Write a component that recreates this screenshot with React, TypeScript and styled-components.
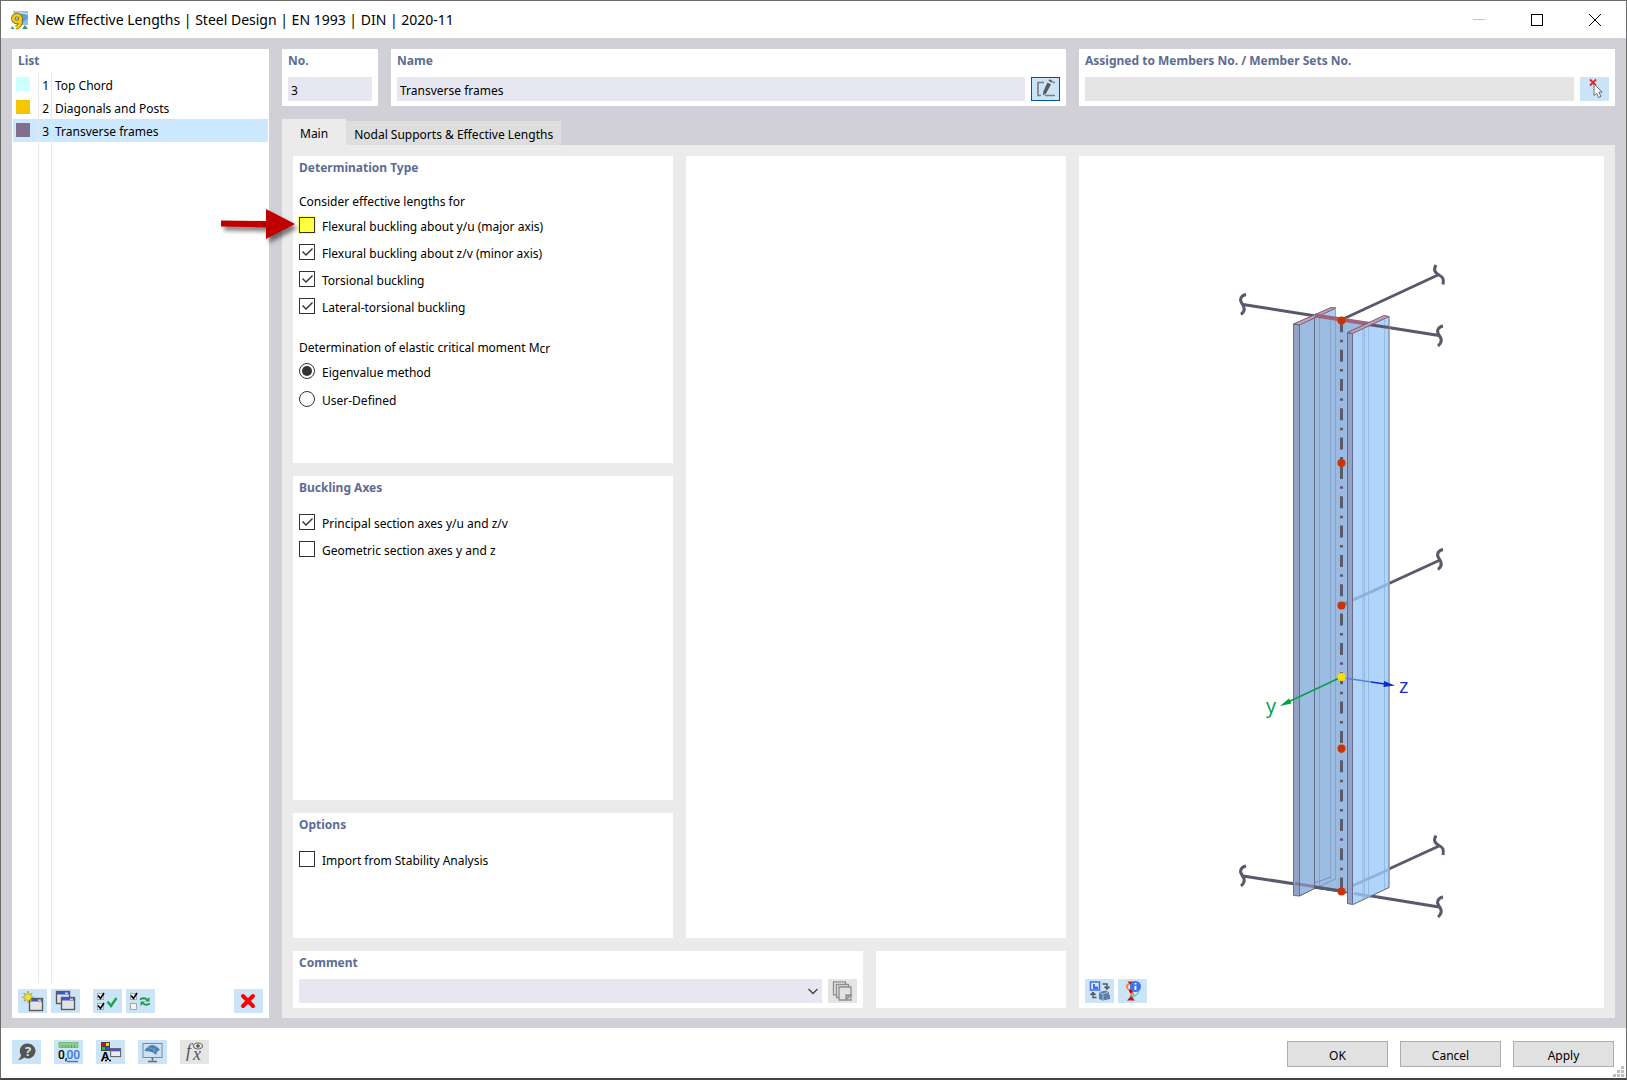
import React, { useState } from "react";
import styled, { createGlobalStyle } from "styled-components";

const color = {
  frame: "#6b6b6b",
  backdrop: "#d1d0d6",
  sheet: "#ebebeb",
  panel: "#ffffff",
  field: "#e7e7f1",
  disabled: "#e5e5e5",
  tool: "#cce4f7",
  selected: "#cce8ff",
  heading: "#5d6c94",
  rule: "#e8e8ec",
  ink: "#000000",
};

const GlobalStyle = createGlobalStyle`
  *, *::before, *::after { box-sizing: border-box; }
  body { margin: 0; }
  body, button, input, select {
    font-family: "Noto Sans", "Open Sans", sans-serif;
    font-size: 12px;
    color: ${color.ink};
  }
  button { padding: 0; border: 0; background: none; }
`;

const Window = styled.div`
  display: flex;
  flex-direction: column;
  min-height: 100vh;
  border: 1px solid ${color.frame};
  border-bottom: 2px solid #444444;
  background: ${color.panel};
`;

const TitleBar = styled.header`
  display: flex;
  align-items: center;
  height: 37px;
  padding: 0 2px 0 9px;
`;

const Title = styled.h1`
  flex: 1;
  margin: 0 0 0 5px;
  font-size: 14px;
  line-height: 20px;
  font-weight: 400;
`;

const CaptionButton = styled.button`
  display: grid;
  place-items: center;
  width: 58px;
  height: 37px;
`;

const Body = styled.main`
  flex: 1;
  display: grid;
  grid-template-columns: 257px minmax(0, 1fr);
  gap: 13px;
  padding: 11px 11px 10px;
  background: ${color.backdrop};
`;

const Panel = styled.section`
  display: flex;
  flex-direction: column;
  min-width: 0;
  background: ${color.panel};
`;

const Heading = styled.h2`
  height: 28px;
  margin: 0;
  padding: 2px 6px 0;
  font-size: 12px;
  line-height: 20px;
  font-weight: 700;
  color: ${color.heading};
  white-space: nowrap;
`;

const ListPanel = styled(Panel)`
  padding: 0 1px;
`;

const ListHeading = styled(Heading)`
  height: 24px;
  padding: 2px 5px 0;
`;

const Rows = styled.div`
  flex: 1;
  display: flex;
  flex-direction: column;
`;

const Row = styled.button<{ $selected?: boolean }>`
  display: grid;
  grid-template-columns: 26px 13px minmax(0, 1fr);
  height: 23px;
  line-height: 25px;
  text-align: left;
  background: ${(p) => (p.$selected ? color.selected : "transparent")};
`;

const RowSpace = styled.div`
  flex: 1;
  display: grid;
  grid-template-columns: 26px 13px minmax(0, 1fr);
`;

const SwatchCell = styled.span`
  border-right: 1px solid ${color.rule};
  padding: 4px 3px;
`;

const Swatch = styled.span<{ $fill: string }>`
  display: block;
  width: 14px;
  height: 14px;
  background: ${(p) => p.$fill};
`;

const NumberCell = styled.span`
  border-right: 1px solid ${color.rule};
  padding-right: 2px;
  text-align: right;
`;

const NameCell = styled.span`
  padding-left: 3px;
`;

const ListTools = styled.div`
  display: flex;
  gap: 4px;
  padding: 6px 5px 5px;
`;

const ToolButton = styled.button<{ $off?: boolean; $active?: boolean; $before?: string }>`
  display: grid;
  place-items: center;
  flex: none;
  width: 29px;
  height: 24px;
  margin-left: ${(p) => p.$before || "0"};
  background: ${(p) => (p.$off ? color.disabled : color.tool)};
  border: ${(p) => (p.$active ? "1px solid #00549f" : "0")};
`;

const Editor = styled.div`
  display: flex;
  flex-direction: column;
  min-width: 0;
`;

const TopRow = styled.div`
  display: grid;
  grid-template-columns: 96px minmax(0, 1fr) 536px;
  gap: 13px;
  margin-bottom: 13px;
`;

const FieldRow = styled.div`
  display: flex;
  gap: 6px;
  padding: 0 6px 5px;
`;

const TextField = styled.input`
  flex: 1;
  min-width: 0;
  height: 24px;
  padding: 3px 3px 0;
  border: 0;
  border-radius: 0;
  background: ${(p) => (p.disabled ? color.disabled : color.field)};
`;

const Tabs = styled.div`
  display: flex;
  align-items: flex-end;
`;

const Tab = styled.button<{ $active?: boolean }>`
  height: ${(p) => (p.$active ? "26px" : "24px")};
  padding: ${(p) => (p.$active ? "3px 18px 0" : "3px 8px 0")};
  background: ${(p) => (p.$active ? color.sheet : "#dedede")};
`;

const Sheet = styled.div`
  flex: 1;
  display: grid;
  grid-template-columns: minmax(0, 1fr) 525px;
  gap: 13px;
  padding: 11px 11px 10px;
  background: ${color.sheet};
`;

const Settings = styled.div`
  display: flex;
  flex-direction: column;
  gap: 13px;
`;

const Columns = styled.div`
  flex: 1;
  display: grid;
  grid-template-columns: repeat(2, minmax(0, 1fr));
  gap: 13px;
`;

const Groups = styled.div`
  display: grid;
  grid-template-rows: 307fr 324fr 125fr;
  gap: 13px;
`;

const CommentRow = styled.div`
  display: grid;
  grid-template-columns: 3fr 1fr;
  gap: 13px;
`;

const Options = styled.div<{ $gap?: number }>`
  display: flex;
  flex-direction: column;
  align-items: flex-start;
  gap: ${(p) => p.$gap ?? 5}px;
  padding: 0 6px;
`;

const Caption = styled.p<{ $above: number }>`
  margin: ${(p) => p.$above}px 6px 1px;
  line-height: 22px;
`;

const Subscript = styled.sub`
  font-size: 12px;
  line-height: 1;
  vertical-align: -1px;
`;

const Space = styled.div`
  height: 7px;
`;

const OptionLabel = styled.label`
  display: flex;
  align-items: center;
  gap: 7px;
`;

const OptionText = styled.span`
  padding-top: 4px;
  line-height: 18px;
`;

const CheckBox = styled.input<{ $marked?: boolean }>`
  appearance: none;
  width: 16px;
  height: 16px;
  margin: 0;
  border: 1px solid #333333;
  background: ${(p) => (p.$marked ? "#ffff3f" : "#ffffff")};
  box-shadow: ${(p) => (p.$marked ? "0 0 1px 1px #ffff66" : "none")};
  &:checked::before {
    content: "";
    display: block;
    width: 14px;
    height: 14px;
    background: #333333;
    clip-path: polygon(2px 7px, 3px 6px, 6px 9px, 12px 3px, 13px 4px, 6px 11px);
  }
`;

const Radio = styled.input`
  appearance: none;
  display: grid;
  place-items: center;
  width: 16px;
  height: 16px;
  margin: 0;
  border: 1px solid #333333;
  border-radius: 50%;
  &:checked::before {
    content: "";
    width: 10px;
    height: 10px;
    border-radius: 50%;
    background: #333333;
  }
`;

const SelectBox = styled.div`
  position: relative;
  flex: 1;
`;

const Select = styled.select`
  appearance: none;
  display: block;
  width: 100%;
  height: 24px;
  padding: 0 24px 0 3px;
  border: 0;
  border-radius: 0;
  background: ${color.field};
`;

const Chevron = styled.svg`
  position: absolute;
  right: 4px;
  top: 9px;
  pointer-events: none;
`;

const PreviewArea = styled.div`
  flex: 1;
  display: flex;
  min-height: 0;
`;

const PreviewTools = styled.div`
  display: flex;
  gap: 4px;
  padding: 6px 6px 5px;
`;

const Footer = styled.footer`
  position: relative;
  display: flex;
  align-items: flex-start;
  gap: 13px;
  height: 50px;
  padding: 12px 12px 0 11px;
`;

const DialogButtons = styled.div`
  display: flex;
  gap: 12px;
  margin-left: auto;
  padding-top: 1px;
`;

const DialogButton = styled.button`
  width: 101px;
  height: 26px;
  padding-top: 2px;
  border: 1px solid #adadad;
  background: #e1e1e1;
`;

const Grip = styled.svg`
  position: absolute;
  right: 2px;
  bottom: 1px;
`;

const Anchor = styled.div`
  position: relative;
`;

const Pointer = styled.svg`
  position: absolute;
  right: 100%;
  top: -5px;
  margin-right: -2px;
  overflow: visible;
  pointer-events: none;
  filter: drop-shadow(3px 4px 2px rgba(0, 0, 0, 0.5));
`;

const AppIcon = () => (
  <svg width="20" height="20" viewBox="0 0 20 20">
    <path d="M3 1h15v14H8z" fill="#8cc0e8" />
    <path d="M11 4h7v5l-5 3z" fill="#5f9fd4" />
    <path d="M4 1l14 2v2L9 3z" fill="#b9daf0" />
    <path d="M15 15l3 4h-6zM2 16l3 3H1z" fill="#3f9a6a" />
    <circle cx="7" cy="8.500" r="3.600" fill="#8cc0e8" stroke="#6b5a10" strokeWidth="4.400" />
    <path d="M10.600 9q.5 7-4.600 8.500" fill="none" stroke="#6b5a10" strokeWidth="4.600" />
    <circle cx="7" cy="8.500" r="3.600" fill="none" stroke="#f5c518" strokeWidth="3" />
    <path d="M10.600 9q.5 7-4.600 8.500" fill="none" stroke="#f5c518" strokeWidth="3" />
  </svg>
);

const MiniWindow = ({ x, y }: { x: number; y: number }) => (
  <g>
    <rect x={x + 0.5} y={y + 0.5} width="13" height="12" fill="#e4e4e6" stroke="#5c5c5c" strokeWidth="1.400" />
    <rect x={x + 1} y={y + 1} width="12" height="2.500" fill="#3f57c8" />
    <rect x={x + 9} y={y + 1.5} width="3" height="1.500" fill="#c8d0f0" />
  </g>
);

const NewIcon = () => (
  <svg width="24" height="22" viewBox="0 0 24 22">
    <MiniWindow x={8} y={8} />
    <path d="M7 0l1.300 4.300L12 2.500l-2 3.700 4 1.300-4 1.300 1.500 3.500-3.300-2L7 14l-1.200-3.800-3.500 2 1.500-3.500L0 7.500l4-1.300-2-3.700 3.700 1.800z" fill="#f2e22a" stroke="#9a8f30" strokeWidth=".7" transform="translate(1 1) scale(.85)" />
  </svg>
);

const CopyIcon = () => (
  <svg width="24" height="22" viewBox="0 0 24 22">
    <MiniWindow x={2} y={1} />
    <MiniWindow x={7} y={7} />
  </svg>
);

const TinyCheck = ({ y, on }: { y: number; on?: boolean }) => (
  <g>
    <rect x="1.500" y={y + 0.5} width="6" height="6" fill="#f4f4f4" stroke="#a8a8a8" />
    {on && <path d={`M2 ${y + 2.5}l2.500 3L8 ${y}`} fill="none" stroke="#000" strokeWidth="1.600" />}
  </g>
);

const CheckAllIcon = () => (
  <svg width="24" height="22" viewBox="0 0 24 22">
    <TinyCheck y={3} on />
    <TinyCheck y={13} on />
    <path d="M11.500 11.500l3.500 4.500L20.500 8" fill="none" stroke="#19a34a" strokeWidth="2.400" />
  </svg>
);

const InvertIcon = () => (
  <svg width="24" height="22" viewBox="0 0 24 22">
    <TinyCheck y={3} on />
    <TinyCheck y={13} />
    <path d="M11 9.500q4-2.500 7 0M21 13.500q-4 2.500-7 0" fill="none" stroke="#1f9a48" strokeWidth="1.800" />
    <path d="M20.500 7v4.500H16zM11.500 16v-4.500H16z" fill="#1f9a48" />
  </svg>
);

const DeleteIcon = () => (
  <svg width="19" height="18" viewBox="0 0 19 18">
    <path d="M4 4l10 10M14 4L4 14" stroke="#ff0000" strokeWidth="4" strokeLinecap="round" />
  </svg>
);

const EditIcon = () => (
  <svg width="22" height="20" viewBox="0 0 22 20">
    <path d="M9 3.500H3v13h3M10 16.500h10M18 3.500h2" fill="none" stroke="#7c7c7c" strokeWidth="1.600" />
    <path d="M12.500 3.500l3.500 2-5 9-3 2 .3-4zM13.500 1.800l1-1.500L18 2.300l-1 1.500z" fill="#5c5c5c" />
  </svg>
);

const PickIcon = () => (
  <svg width="22" height="22" viewBox="0 0 22 22">
    <path d="M6 1.500l6 6M12 1.500l-6 6" stroke="#ee1c25" strokeWidth="1.800" />
    <path d="M10 6v11.500l2.600-2.300 2.200 4.300 2.200-1.100-2.100-4.200h3.300z" fill="#fff" stroke="#6a6a6a" />
  </svg>
);

const SheetsIcon = () => (
  <svg width="22" height="20" viewBox="0 0 22 20" fill="#e2e2e2" stroke="#8e8e8e" strokeWidth="1.300">
    <path d="M1.500.8h12v13h-12z" />
    <path d="M4.500 3.500h12v13h-12z" />
    <path d="M7 6h12v13H7z" />
    <path d="M19 14l-5 5v-5z" fill="#a8a8a8" />
  </svg>
);

const HelpIcon = () => (
  <svg width="20" height="20" viewBox="0 0 20 20">
    <path d="M11 1.500a7.500 7.500 0 1 1-3.800 14C5.500 17 3.500 17.600 1 18c1.800-1.500 2.700-3 3-5A7.500 7.500 0 0 1 11 1.500z" fill="#555" />
    <text x="11" y="14" textAnchor="middle" fontSize="13" fontWeight="700" fill="#cce4f7">?</text>
  </svg>
);

const DecimalsIcon = () => (
  <svg width="24" height="22" viewBox="0 0 24 22">
    <rect x="2" y="1.500" width="19" height="5" fill="#8ed08a" stroke="#64b060" strokeWidth=".7" />
    <path d="M5.500 4v2.500M8.500 4v2.500M11.500 4v2.500M14.500 4v2.500M17.500 4v2.500" stroke="#5aa056" />
    <text x="1" y="17.500" fontSize="12" fontFamily="Roboto" fontWeight="500">0,</text>
    <text x="9.500" y="17.500" fontSize="12" fontFamily="Roboto" fontWeight="500" fill="#3d74d8">00</text>
    <path d="M10 20.500h11" stroke="#3d74d8" strokeWidth="1.400" />
  </svg>
);

const DisplayIcon = () => (
  <svg width="24" height="22" viewBox="0 0 24 22">
    <path d="M2 1h9v9H2z" fill="#444" />
    <path d="M3 2h3v3H3z" fill="#ff0000" />
    <path d="M7 2h3v3H7z" fill="#ffd800" />
    <path d="M3 6h3v3H3z" fill="#19c819" />
    <path d="M7 6h3v3H7z" fill="#2b4bff" />
    <text x="2.500" y="18.500" fontSize="11" fontWeight="700">A</text>
    <path d="M2 19.500h2M6 19.500h2M10 19.500h2" stroke="#000" strokeWidth="1.500" />
    <rect x="11.600" y="7.600" width="10" height="8" fill="#ececec" stroke="#5c5c5c" />
    <path d="M12 8h9.500v2.300H12z" fill="#3f57c8" />
  </svg>
);

const RenderIcon = () => (
  <svg width="24" height="22" viewBox="0 0 24 22">
    <rect x="2" y="2.500" width="19" height="14" fill="#cfe0f0" stroke="#7c8a98" />
    <path d="M3.500 10q2-5 7.500-6 5 .5 8 5-3 .5-4 5-3-4-11.500-4z" fill="#4a7cb0" />
    <path d="M6 6.500q6 0 9.500 5M15.500 5.500q-3 2-3 6" fill="none" stroke="#8db6de" strokeWidth=".7" />
    <path d="M11.500 16.500v3M7 20.500h9" stroke="#6c6c6c" strokeWidth="1.600" />
  </svg>
);

const FormulaIcon = () => (
  <svg width="24" height="22" viewBox="0 0 24 22">
    <text x="3" y="16" fontFamily="Liberation Serif" fontStyle="italic" fontSize="18" fill="#555">f</text>
    <text x="10" y="19" fontFamily="Liberation Serif" fontStyle="italic" fontSize="18" fill="#555">x</text>
    <ellipse cx="15" cy="5" rx="4.500" ry="3" fill="none" stroke="#6c6c6c" strokeWidth="1.200" />
    <circle cx="15" cy="5" r="1.800" fill="#555" />
  </svg>
);

const SwitchViewIcon = () => (
  <svg width="22" height="22" viewBox="0 0 22 22">
    <rect x="1.500" y="2" width="9" height="8" fill="#dce8fb" stroke="#3f6fe0" strokeWidth="1.500" />
    <path d="M4 4h2v2.500h3V9H4z" fill="#3f6fe0" />
    <path d="M13.500 4H18v4.500M15.500 6.500L18 9l2.500-2.500M7.500 17.500H4V13M1.500 15L4 12.500 6.500 15" fill="none" stroke="#555" strokeWidth="1.500" />
    <path d="M10 12l7-1.500 3 2v2l1 1v3.500L14 20.500 10 19z" fill="#5f7fa8" />
    <path d="M10 12l3 2 6-1.500M14 14.500v5.500" fill="none" stroke="#a9c0dc" />
  </svg>
);

const InfoIcon = () => (
  <svg width="22" height="22" viewBox="0 0 22 22">
    <path d="M9 3v16" stroke="#777" strokeWidth="1.200" />
    <path d="M8 3q-7 4 1 8 5 4 0 8" fill="none" stroke="#ff7a1c" strokeWidth="1.600" />
    <path d="M10 17q6-2 7-6" fill="none" stroke="#5fd0c0" strokeWidth="1.400" />
    <path d="M5.500 1.500h7L9 5zM5 20.500h8L9 16z" fill="#c81414" />
    <circle cx="9" cy="11" r="2" fill="#e00000" />
    <circle cx="13.500" cy="6.500" r="5.500" fill="#3f74e6" />
    <path d="M13.500 6v4M13.500 3v1.600" stroke="#fff" strokeWidth="1.800" />
  </svg>
);

/* Cut mark at the free end of a connected member. */
const Break = ({ x, y, flip }: { x: number; y: number; flip?: boolean }) => (
  <path
    transform={`translate(${x} ${y})`}
    d={flip ? "M-3 -10C-6 -5 -4 -2 0 0S5 4 4 9.500" : "M3 -10C-2 -9 -4 -5 -1 -1S2 7 -2 10"}
    fill="none"
    stroke="#5a596c"
    strokeWidth="3"
  />
);

const nodes = [320.5, 463, 605.5, 748.5, 891.5];

const MemberDrawing = () => (
  <svg width="100%" height="100%" viewBox="1079 156 525 817" role="img" aria-label="Member with local axes y and z">
    <g stroke="#5a596c" strokeWidth="3">
      <path d="M1243 304.500L1341 320L1439 335.500M1341 320L1439 274.500" fill="none" />
      <path d="M1341 605.500L1439 560.500" />
      <path d="M1243 876L1341 891L1439 907M1341 891L1439 846" fill="none" />
    </g>

    <path d="M1299.500 325L1336 307.500V316L1348 322V892L1314.500 887.500L1299.500 896Z" fill="#9abae1" fillOpacity=".97" />
    <path d="M1316 316L1335.500 308V321L1316 318Z" fill="#b0d4fa" opacity=".7" />
    <path d="M1336 319.500L1372 324L1352 333V891H1336Z" fill="#9abae1" />
    <path d="M1293.500 324H1299.500V896L1293.500 895.500Z" fill="#93a2c4" stroke="#6d6f8c" />
    <path d="M1293.500 324L1331 307.500L1336 308L1299.500 325Z" fill="#d29aac" stroke="#5f6280" />
    <path d="M1314.500 317V887.500" stroke="#666b88" />
    <path d="M1319.500 318V886M1330.500 320V879M1335.500 308V879" stroke="#86a4cc" />
    <path d="M1299.500 896L1314.500 888.500L1335.500 879M1314.500 883L1331 877" fill="none" stroke="#7794be" />
    <path d="M1299.500 896L1314.500 888.500" stroke="#5f6280" />
    <path d="M1295 883.500L1341 891" stroke="#5a596c" strokeWidth="3" opacity=".45" />
    <path d="M1314 887L1341 891" stroke="#5a596c" strokeWidth="3" />
    <path d="M1315 315.500L1341 319.500L1370 324" fill="none" stroke="#a0627c" strokeWidth="4" />

    <path d="M1352.500 333.500L1389 316.500V887.500L1352.500 904.500Z" fill="#b0d4fa" />
    <path d="M1363 329V899M1364.500 329V898M1384.500 319V889M1368.500 326V896" stroke="#95badf" />
    <path d="M1389 316.500V887.500" stroke="#8592b4" strokeWidth="1.500" />
    <path d="M1353 904.500L1389 887.500" stroke="#5f6280" />
    <path d="M1368 324.500L1389 327.500" stroke="#5a596c" strokeWidth="3" />
    <path d="M1341 605.500L1389 583.700M1345 889L1389 869.500" stroke="#91b1da" strokeWidth="3" />
    <path d="M1354 893.500L1370 896" stroke="#91b1da" strokeWidth="3" />
    <path d="M1347.500 333H1352.500V904.500L1347.500 903.500Z" fill="#93a2c4" stroke="#666b88" />
    <path d="M1341 605.500L1348 602.300" stroke="#777f9c" strokeWidth="3" />
    <path d="M1347.500 332.500L1384 315.500L1389 316.500L1352.500 333.500Z" fill="#d29aac" stroke="#5f6280" />

    <path d="M1341.500 320.300V891" stroke="#5c5b6e" strokeWidth="3" strokeDasharray="12 7.400 2.500 7.430" />

    <Break x={1243} y={304.5} />
    <Break x={1439} y={275} flip />
    <Break x={1440} y={336} />
    <Break x={1440} y={559.5} />
    <Break x={1243} y={876} />
    <Break x={1439} y={845.5} flip />
    <Break x={1440} y={907} />

    <path d="M1341.500 677L1286 703" stroke="#00a046" strokeWidth="1.500" />
    <path d="M1280 706L1289 698.500L1291.500 703.500Z" fill="#00a046" />
    <path d="M1341.500 677.500L1371 682" stroke="#5a82dc" strokeWidth="1.500" />
    <path d="M1371 682L1385 684" stroke="#0a32c8" strokeWidth="1.500" />
    <path d="M1395 685.500L1384 681L1383.500 687Z" fill="#0a32c8" />
    <text x="1266" y="713" fontFamily="Open Sans" fontSize="20" fill="#00a046">y</text>
    <text x="1399" y="693" fontFamily="Open Sans" fontSize="20" fill="#0a32c8">z</text>

    {nodes.map((y) => (
      <circle key={y} cx="1341.500" cy={y} r="4" fill="#cc3300" />
    ))}
    <circle cx="1341.500" cy="677" r="4" fill="#ffdc00" />
  </svg>
);

const items = [
  { no: 1, name: "Top Chord", fill: "#ccffff" },
  { no: 2, name: "Diagonals and Posts", fill: "#f7c400" },
  { no: 3, name: "Transverse frames", fill: "#80708f" },
];

type CheckProps = { label: string; on?: boolean; marked?: boolean };

const Check = ({ label, on, marked }: CheckProps) => (
  <OptionLabel>
    <CheckBox type="checkbox" defaultChecked={on} $marked={marked} />
    <OptionText>{label}</OptionText>
  </OptionLabel>
);

const RadioOption = ({ label, on }: { label: string; on?: boolean }) => (
  <OptionLabel>
    <Radio type="radio" name="critical-moment" defaultChecked={on} />
    <OptionText>{label}</OptionText>
  </OptionLabel>
);

export default function App() {
  const [selected, setSelected] = useState(3);

  return (
    <Window>
      <GlobalStyle />
      <TitleBar>
        <AppIcon />
        <Title>New Effective Lengths | Steel Design | EN 1993 | DIN | 2020-11</Title>
        <CaptionButton aria-label="Minimize" disabled>
          <svg width="12" height="12"><path d="M0 5.500h12" stroke="#c4c4c4" /></svg>
        </CaptionButton>
        <CaptionButton aria-label="Maximize">
          <svg width="12" height="12"><rect x=".5" y=".5" width="11" height="11" fill="none" stroke="#000" /></svg>
        </CaptionButton>
        <CaptionButton aria-label="Close">
          <svg width="12" height="12"><path d="M0 0l12 12M12 0L0 12" stroke="#000" /></svg>
        </CaptionButton>
      </TitleBar>

      <Body>
        <ListPanel>
          <ListHeading>List</ListHeading>
          <Rows>
            {items.map((item) => (
              <Row key={item.no} $selected={item.no === selected} onClick={() => setSelected(item.no)}>
                <SwatchCell><Swatch $fill={item.fill} /></SwatchCell>
                <NumberCell>{item.no}</NumberCell>
                <NameCell>{item.name}</NameCell>
              </Row>
            ))}
            <RowSpace><SwatchCell /><NumberCell /></RowSpace>
          </Rows>
          <ListTools>
            <ToolButton aria-label="New"><NewIcon /></ToolButton>
            <ToolButton aria-label="Copy"><CopyIcon /></ToolButton>
            <ToolButton aria-label="Select all" $before="9px"><CheckAllIcon /></ToolButton>
            <ToolButton aria-label="Invert selection"><InvertIcon /></ToolButton>
            <ToolButton aria-label="Delete" $before="auto"><DeleteIcon /></ToolButton>
          </ListTools>
        </ListPanel>

        <Editor>
          <TopRow>
            <Panel>
              <Heading as="label" htmlFor="no">No.</Heading>
              <FieldRow><TextField id="no" defaultValue="3" /></FieldRow>
            </Panel>
            <Panel>
              <Heading as="label" htmlFor="name">Name</Heading>
              <FieldRow>
                <TextField id="name" defaultValue="Transverse frames" />
                <ToolButton aria-label="Edit name" $active><EditIcon /></ToolButton>
              </FieldRow>
            </Panel>
            <Panel>
              <Heading as="label" htmlFor="assigned">Assigned to Members No. / Member Sets No.</Heading>
              <FieldRow>
                <TextField id="assigned" disabled />
                <ToolButton aria-label="Pick members"><PickIcon /></ToolButton>
              </FieldRow>
            </Panel>
          </TopRow>

          <Tabs role="tablist">
            <Tab role="tab" aria-selected $active>Main</Tab>
            <Tab role="tab" aria-selected={false}>Nodal Supports &amp; Effective Lengths</Tab>
          </Tabs>

          <Sheet>
            <Settings>
              <Columns>
                <Groups>
                  <Panel>
                    <Heading>Determination Type</Heading>
                    <Caption $above={7}>Consider effective lengths for</Caption>
                    <Anchor>
                      <Pointer width="74" height="30" viewBox="0 0 74 30" aria-hidden="true">
                        <path d="M0 11.500L45 12V0L74 15L45 30V18.500L0 17.500Z" fill="#c00000" />
                      </Pointer>
                      <Options>
                        <Check label="Flexural buckling about y/u (major axis)" marked />
                        <Check label="Flexural buckling about z/v (minor axis)" on />
                        <Check label="Torsional buckling" on />
                        <Check label="Lateral-torsional buckling" on />
                      </Options>
                    </Anchor>
                    <Caption $above={20}>
                      Determination of elastic critical moment M<Subscript>cr</Subscript>
                    </Caption>
                    <Options $gap={6}>
                      <RadioOption label="Eigenvalue method" on />
                      <RadioOption label="User-Defined" />
                    </Options>
                  </Panel>
                  <Panel>
                    <Heading>Buckling Axes</Heading>
                    <Space />
                    <Options>
                      <Check label="Principal section axes y/u and z/v" on />
                      <Check label="Geometric section axes y and z" />
                    </Options>
                  </Panel>
                  <Panel>
                    <Heading>Options</Heading>
                    <Space />
                    <Options>
                      <Check label="Import from Stability Analysis" />
                    </Options>
                  </Panel>
                </Groups>
                <Panel />
              </Columns>
              <CommentRow>
                <Panel>
                  <Heading as="label" htmlFor="comment">Comment</Heading>
                  <FieldRow>
                    <SelectBox>
                      <Select id="comment" defaultValue=""><option value="" /></Select>
                      <Chevron width="10" height="7">
                        <path d="M.5 1L5 5.500L9.500 1" fill="none" stroke="#444" strokeWidth="1.300" />
                      </Chevron>
                    </SelectBox>
                    <ToolButton aria-label="Comment library" $off><SheetsIcon /></ToolButton>
                  </FieldRow>
                </Panel>
                <Panel />
              </CommentRow>
            </Settings>

            <Panel>
              <PreviewArea><MemberDrawing /></PreviewArea>
              <PreviewTools>
                <ToolButton aria-label="Switch view"><SwitchViewIcon /></ToolButton>
                <ToolButton aria-label="Buckling information"><InfoIcon /></ToolButton>
              </PreviewTools>
            </Panel>
          </Sheet>
        </Editor>
      </Body>

      <Footer>
        <ToolButton aria-label="Help"><HelpIcon /></ToolButton>
        <ToolButton aria-label="Units and decimal places"><DecimalsIcon /></ToolButton>
        <ToolButton aria-label="Display properties"><DisplayIcon /></ToolButton>
        <ToolButton aria-label="Rendering"><RenderIcon /></ToolButton>
        <ToolButton aria-label="Formula" $off><FormulaIcon /></ToolButton>
        <DialogButtons>
          <DialogButton>OK</DialogButton>
          <DialogButton>Cancel</DialogButton>
          <DialogButton>Apply</DialogButton>
        </DialogButtons>
        <Grip width="11" height="11" fill="#bcbcbc" aria-hidden="true">
          <path d="M8 0h3v3H8zM4 4h3v3H4zM8 4h3v3H8zM0 8h3v3H0zM4 8h3v3H4zM8 8h3v3H8z" />
        </Grip>
      </Footer>
    </Window>
  );
}
